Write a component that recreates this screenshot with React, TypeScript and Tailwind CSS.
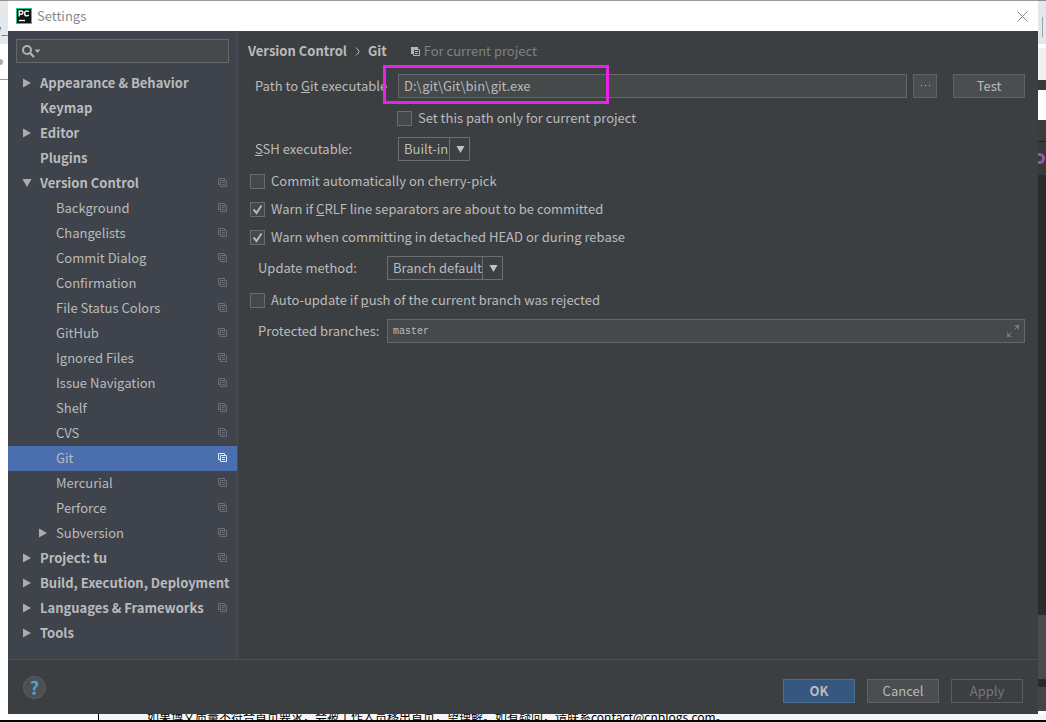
import type { ReactNode } from "react";

type TreeItem = {
  label: string;
  level: 0 | 1;
  arrow?: "right" | "down";
  scoped?: boolean;
  selected?: boolean;
};

const tree: TreeItem[] = [
  { label: "Appearance & Behavior", level: 0, arrow: "right" },
  { label: "Keymap", level: 0 },
  { label: "Editor", level: 0, arrow: "right" },
  { label: "Plugins", level: 0 },
  { label: "Version Control", level: 0, arrow: "down", scoped: true },
  { label: "Background", level: 1, scoped: true },
  { label: "Changelists", level: 1, scoped: true },
  { label: "Commit Dialog", level: 1, scoped: true },
  { label: "Confirmation", level: 1, scoped: true },
  { label: "File Status Colors", level: 1, scoped: true },
  { label: "GitHub", level: 1, scoped: true },
  { label: "Ignored Files", level: 1, scoped: true },
  { label: "Issue Navigation", level: 1, scoped: true },
  { label: "Shelf", level: 1, scoped: true },
  { label: "CVS", level: 1, scoped: true },
  { label: "Git", level: 1, scoped: true, selected: true },
  { label: "Mercurial", level: 1, scoped: true },
  { label: "Perforce", level: 1, scoped: true },
  { label: "Subversion", level: 1, arrow: "right", scoped: true },
  { label: "Project: tu", level: 0, arrow: "right", scoped: true },
  { label: "Build, Execution, Deployment", level: 0, arrow: "right" },
  { label: "Languages & Frameworks", level: 0, arrow: "right", scoped: true },
  { label: "Tools", level: 0, arrow: "right" },
];

function ScopeIcon({ className }: { className: string }) {
  return (
    <svg viewBox="0 0 9 9" className={`h-[9px] w-[9px] shrink-0 ${className}`} fill="none" stroke="currentColor" aria-hidden="true">
      <path d="M2 6.5H0.5V0.5H6.5V2" />
      <path d="M2.5 2.5H8.5V8.5H2.5Z" />
      <path d="M4 4.5H7M4 6.5H7" />
    </svg>
  );
}

function CopyIcon() {
  return (
    <svg viewBox="0 0 9 9" className="h-[9px] w-[9px] shrink-0 text-[#b4b6b8]" aria-hidden="true">
      <path d="M0 0H7V2H2V7H0Z" fill="currentColor" />
      <path d="M2.5 2.5H8.5V8.5H2.5Z M4 4.5H7 M4 6.5H7" fill="none" stroke="currentColor" />
    </svg>
  );
}

function TreeArrow({ direction }: { direction?: "right" | "down" }) {
  return (
    <svg viewBox="0 0 10 10" className="h-[10px] w-[10px] shrink-0 text-[#a9adb3]" fill="currentColor" aria-hidden="true">
      {direction === "right" && <path d="M1 0.5L9 5L1 9.5Z" />}
      {direction === "down" && <path d="M0.5 1H9.5L5 9Z" />}
    </svg>
  );
}

function TreeRow({ item }: { item: TreeItem }) {
  return (
    <li>
      <a
        href="#"
        aria-current={item.selected ? "page" : undefined}
        className={`flex h-[25px] items-center pr-[10px] pb-[2px] whitespace-nowrap ${item.level === 0 ? "gap-2 pl-[14px] font-bold" : "gap-2 pl-[30px]"} ${
          item.selected ? "bg-[#4b6eaf]" : ""
        }`}
      >
        <TreeArrow direction={item.arrow} />
        <span className="flex-1">{item.label}</span>
        {item.scoped && <ScopeIcon className={item.selected ? "text-[#e4e8ef]" : "text-[#6b6f75]"} />}
      </a>
    </li>
  );
}

function Check({ id, checked = false, children }: { id: string; checked?: boolean; children: ReactNode }) {
  return (
    <div className="flex items-center gap-[6px]">
      <span className="grid h-[15px] w-[15px] shrink-0">
        <input
          id={id}
          type="checkbox"
          defaultChecked={checked}
          className="peer col-start-1 row-start-1 h-[15px] w-[15px] appearance-none border border-[#6b6b6b] bg-[#43484a]"
        />
        <svg
          viewBox="0 0 15 15"
          className="pointer-events-none invisible col-start-1 row-start-1 h-[15px] w-[15px] peer-checked:visible"
          fill="none"
          stroke="#b4b6b8"
          strokeWidth="2"
          aria-hidden="true"
        >
          <path d="M3.5 7.5L6.5 11L11.5 3.5" />
        </svg>
      </span>
      <label htmlFor={id}>{children}</label>
    </div>
  );
}

function Dropdown({ id, value, className }: { id: string; value: string; className: string }) {
  return (
    <span className={`grid h-6 ${className}`}>
      <select
        id={id}
        className="col-start-1 row-start-1 h-6 w-full appearance-none border border-[#6b6e70] bg-[#3c4042] pr-5 pl-[5px] text-[#bbbbbb]"
      >
        <option>{value}</option>
      </select>
      <span className="pointer-events-none col-start-1 row-start-1 flex w-[21px] items-center justify-center justify-self-end border-l border-[#6b6e70]">
        <svg viewBox="0 0 9 7" className="h-[7px] w-[9px]" fill="#c0c2c4" aria-hidden="true">
          <path d="M0.5 0H8.5L4.5 7Z" />
        </svg>
      </span>
    </span>
  );
}

const buttonBase = "flex h-6 w-[72px] items-center justify-center border";

export default function App() {
  return (
    <div className="flex h-screen flex-col overflow-hidden bg-[#f4f6fa] font-['Noto_Sans_CJK_SC',sans-serif] text-[13px] leading-5 text-[#bbbbbb]">
      <div className="flex min-h-0 flex-1">
        <div className="flex w-2 shrink-0 flex-col overflow-hidden bg-white text-[#666666]" aria-hidden="true">
          <div className="flex h-11 items-center justify-end border-t border-[#8f8f8f] bg-[#e6e9ec] pt-3 text-[12px]">y_</div>
          <div className="flex h-9 items-center border-b border-[#9a9a9a]">
            <span className="h-[6px] w-[3px] rounded-r-full bg-[#aaaaaa]" />
          </div>
        </div>

        <section className="flex min-w-0 flex-1 flex-col border-t border-[#9b9b9b] bg-[#3c3f41]" aria-label="Settings">
          <header className="flex h-[30px] shrink-0 items-center bg-white pr-[10px] pl-2">
            <svg viewBox="0 0 16 16" className="h-4 w-4" aria-hidden="true">
              <rect width="16" height="16" fill="#21c98b" />
              <rect x="1" y="1" width="14" height="14" fill="#0b1512" />
              <g fill="none" stroke="#fff" strokeWidth="1.4">
                <path d="M3.2 8.5V3H5.4Q7 3 7 4.6T5.4 6.2H3.2" />
                <path d="M12.8 3.9Q12 2.9 10.8 2.9Q8.7 2.9 8.7 5.4T10.8 7.9Q12 7.9 12.8 6.9" />
                <path d="M3 12.5H9" />
              </g>
            </svg>
            <h1 className="flex-1 pl-[5px] text-[#8a8a8a]">Settings</h1>
            <button type="button" aria-label="Close" className="flex h-4 items-center">
              <svg viewBox="0 0 11 11" className="h-[11px] w-[11px]" stroke="#858585" aria-hidden="true">
                <path d="M0.5 0.5L10.5 10.5M10.5 0.5L0.5 10.5" />
              </svg>
            </button>
          </header>

          <div className="flex min-h-0 flex-1">
            <nav className="flex w-[230px] shrink-0 flex-col border-r border-[#4a4e55] bg-[#3e434c]" aria-label="Settings categories">
              <div className="px-2 pt-2 pb-2">
                <div className="flex h-6 items-center border border-[#646868] bg-[#45494a] pl-[5px]">
                  <svg viewBox="0 0 19 13" className="h-[13px] w-[19px]" aria-hidden="true">
                    <circle cx="5" cy="5" r="4" fill="none" stroke="#afb1b3" strokeWidth="2" />
                    <path d="M8 8L12 12" stroke="#afb1b3" strokeWidth="2.4" />
                    <path d="M12.5 4.5H18.5L15.5 8Z" fill="#afb1b3" />
                  </svg>
                  <input type="text" aria-label="Search settings" className="min-w-0 flex-1 bg-transparent outline-none" />
                </div>
              </div>
              <ul>
                {tree.map((item) => (
                  <TreeRow key={item.label} item={item} />
                ))}
              </ul>
            </nav>

            <main className="min-w-0 flex-1 pr-[13px] pl-[10px]">
              <div className="flex h-10 items-center">
                <h2 className="flex items-center gap-2 font-bold">
                  <span>Version Control</span>
                  <svg viewBox="0 0 5 9" className="h-[9px] w-[5px]" fill="none" stroke="#bbbbbb" aria-hidden="true">
                    <path d="M1 0.5Q4 3.5 4 4.5T1 8.5" />
                  </svg>
                  <span>Git</span>
                </h2>
                <span className="flex items-center gap-1 pl-6 text-[#808284]">
                  <CopyIcon />
                  For current project
                </span>
              </div>

              <div className="flex h-[30px] items-center pl-[7px]">
                <label htmlFor="git-path" className="w-[143px] shrink-0 whitespace-nowrap">
                  Path to <u>G</u>it executable
                </label>
                <div className="relative min-w-0 flex-1">
                  <input
                    id="git-path"
                    type="text"
                    defaultValue="D:\git\Git\bin\git.exe"
                    className="block h-6 w-full border border-[#646868] bg-[#45494a] px-[5px] pb-[2px]"
                  />
                  <span className="pointer-events-none absolute -top-[9px] -left-[15px] h-[39px] w-[226px] border-[3px] border-[#ea22e6]" />
                </div>
                <button type="button" aria-label="Browse" className="ml-[6px] flex h-6 w-6 items-center justify-center border border-[#5e6264] bg-[#4a4e50]">
                  <svg viewBox="0 0 9 2" className="h-[2px] w-[9px]" fill="#bbbbbb" aria-hidden="true">
                    <path d="M0 0H1V1H0ZM4 0H5V1H4ZM8 0H9V1H8Z" />
                  </svg>
                </button>
                <button type="button" className={`${buttonBase} ml-4 border-[#5e6264] bg-[#4a4e50]`}>
                  Test
                </button>
              </div>

              <div className="flex h-[34px] items-center pl-[149px]">
                <Check id="only-project">Set this path only for current project</Check>
              </div>

              <div className="mb-1 flex h-7 items-center pl-[7px]">
                <label htmlFor="ssh" className="w-[143px]">
                  <u>S</u>SH executable:
                </label>
                <Dropdown id="ssh" value="Built-in" className="w-[72px]" />
              </div>

              <div className="flex h-7 items-center pl-[2px]">
                <Check id="cherry">Commit automatically on cherry-pick</Check>
              </div>
              <div className="flex h-7 items-center pl-[2px]">
                <Check id="crlf" checked>
                  Warn if <u>C</u>RLF line separators are about to be committed
                </Check>
              </div>
              <div className="flex h-7 items-center pl-[2px]">
                <Check id="detached" checked>
                  Warn when committing in detached HEAD or during rebase
                </Check>
              </div>

              <div className="flex h-[34px] items-center pl-[10px]">
                <label htmlFor="update" className="w-[129px]">
                  Update method:
                </label>
                <Dropdown id="update" value="Branch default" className="w-[116px]" />
              </div>

              <div className="flex h-[30px] items-center pl-[2px]">
                <Check id="auto-update">
                  Auto-update if <u>p</u>ush of the current branch was rejected
                </Check>
              </div>

              <div className="flex h-8 items-center pl-[10px]">
                <label htmlFor="branches" className="w-[129px] shrink-0">
                  Protected branches:
                </label>
                <div className="flex h-6 min-w-0 flex-1 items-center border border-[#646868] bg-[#45494a] pr-[5px] pl-[5px]">
                  <input
                    id="branches"
                    type="text"
                    defaultValue="master"
                    className="min-w-0 flex-1 bg-transparent pt-[2px] font-['Liberation_Mono',monospace] text-[10px] outline-none"
                  />
                  <button type="button" aria-label="Expand" className="flex h-4 items-center">
                    <svg viewBox="0 0 12 12" className="h-3 w-3" aria-hidden="true">
                      <path d="M7 0H12V5ZM0 7V12H5Z" fill="#70767a" />
                      <path d="M10 2L7 5M2 10L5 7" fill="none" stroke="#70767a" />
                    </svg>
                  </button>
                </div>
              </div>
            </main>
          </div>

          <footer className="flex h-[55px] shrink-0 items-center border-t border-[#4e5254] pr-[15px] pl-[15px]">
            <button
              type="button"
              aria-label="Help"
              className="flex h-[23px] w-[23px] items-center justify-center rounded-full border border-[#5c6063] bg-[#4c5052] text-[18px] font-bold text-[#55a3cf]"
            >
              ?
            </button>
            <div className="flex flex-1 justify-end gap-3 pt-2">
              <button type="button" className={`${buttonBase} border-[#4c708c] bg-[#365880] font-bold`}>
                OK
              </button>
              <button type="button" className={`${buttonBase} border-[#5e6264] bg-[#4a4e50]`}>
                Cancel
              </button>
              <button type="button" disabled className={`${buttonBase} border-[#5a5d5f] text-[#777777]`}>
                Apply
              </button>
            </div>
          </footer>
        </section>

        <div className="flex w-2 shrink-0 flex-col overflow-hidden bg-[#2b2b2b]" aria-hidden="true">
          <div className="flex h-11 items-center justify-center border-t border-[#8f8f8f] bg-[#e3e6ea] pt-2">
            <span className="h-5 w-px bg-[#a0a4a8]" />
          </div>
          <div className="h-9 border-t-4 border-white bg-[#f0f0f0]" />
          <div className="h-[10px] bg-[#3a3a3a]" />
          <div className="h-[30px] bg-white" />
          <div className="h-[22px] border-b border-[#222222] bg-[#3c3c3c]" />
          <div className="flex h-[33px] items-center bg-[#3a3a3a]">
            <span className="h-[11px] w-[7px] rounded-r-full border-[3px] border-l-0 border-[#8e5aa5]" />
          </div>
          <div className="flex-1" />
          <div className="h-16 bg-[#4b4b4d]" />
          <div className="h-2 bg-[#2a2a2a]" />
          <div className="h-6 bg-[#434547]" />
          <div className="h-[3px] bg-white" />
        </div>
      </div>

      <div className="flex h-[6px] shrink-0 items-center overflow-hidden bg-[#f4f6fa] text-black">
        <div className="h-full w-[99px] shrink-0 border-r border-black bg-white" />
        <p className="pl-12 text-[12px] leading-4 whitespace-nowrap">
          如果博文质量不符合首页要求，会被工作人员移出首页，望理解。如有疑问，请联系contact@cnblogs.com。
        </p>
      </div>
      <div className="h-[2px] shrink-0 bg-black" />
    </div>
  );
}
